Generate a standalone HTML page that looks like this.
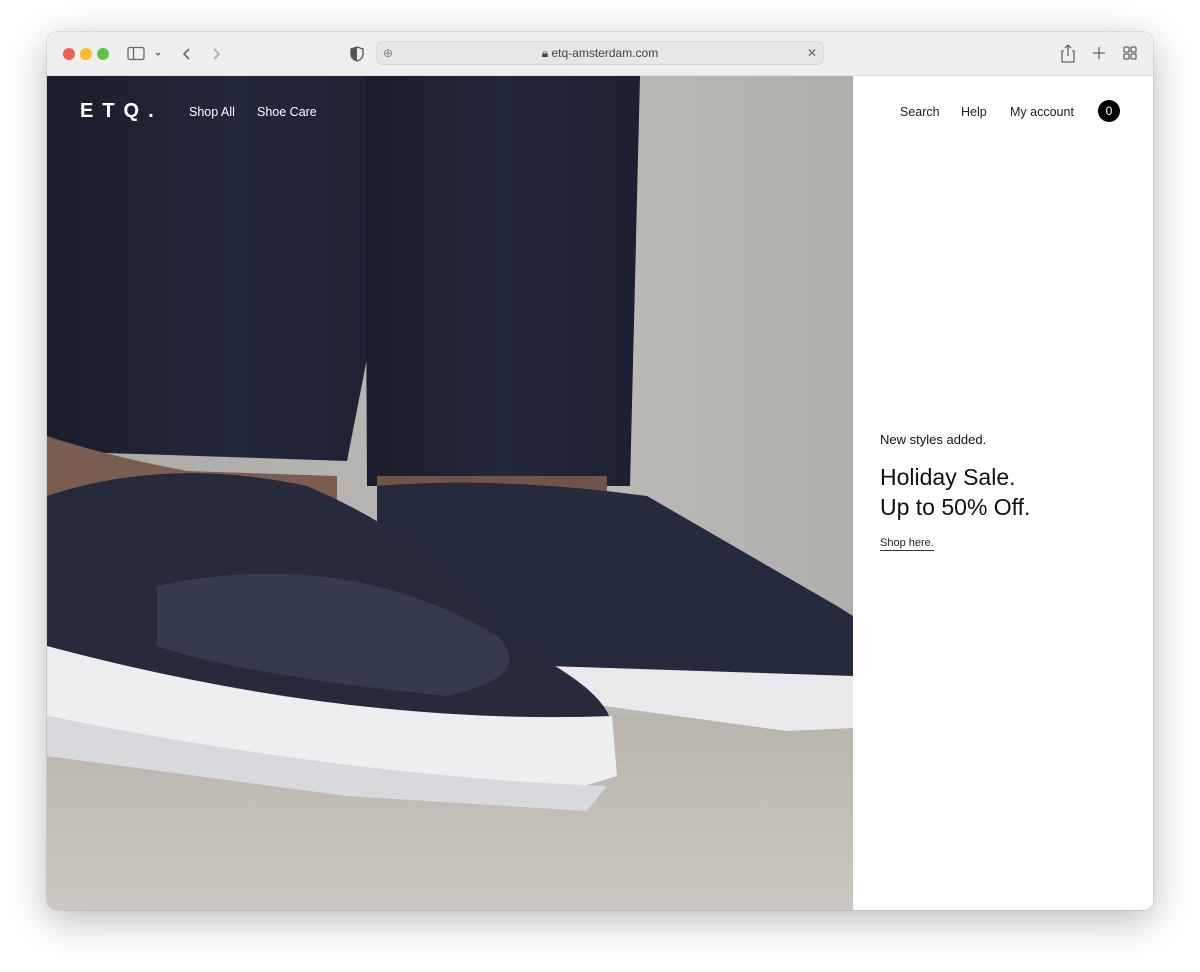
<!DOCTYPE html>
<html><head><meta charset="utf-8"><style>
*{margin:0;padding:0;box-sizing:border-box}
body{width:1200px;height:972px;background:#fff;font-family:"Liberation Sans",sans-serif;position:relative;overflow:hidden}
.win{position:absolute;left:47px;top:32px;width:1106px;height:878px;border-radius:10px;overflow:hidden;box-shadow:0 10px 40px rgba(0,0,0,.28),0 0 0 1px rgba(0,0,0,.08)}
.tb{position:absolute;left:0;top:0;width:100%;height:44px;background:#efefef;border-bottom:1px solid #dcdcdc}
.dot{position:absolute;top:16px;width:12px;height:12px;border-radius:50%}
.url{position:absolute;left:329px;top:9px;width:448px;height:24px;background:#e6e6e6;border-radius:7px;border:1px solid #d8d8d8;font-size:12px;color:#444;text-align:center;line-height:22px}
.img{position:absolute;left:0;top:44px;width:806px;height:834px;background:#b3b2b0}
.side{position:absolute;left:806px;top:44px;width:300px;height:834px;background:#fff}
.nav{position:absolute;top:73px;font-size:12.5px;color:#222}
</style></head><body>
<div class="win">
<div class="tb">
<div class="dot" style="left:16px;background:#ee5f57"></div>
<div class="dot" style="left:33px;background:#f5be2e"></div>
<div class="dot" style="left:50px;background:#5fc442"></div>
<svg style="position:absolute;left:80px;top:14px" width="120" height="16" fill="none" stroke="#666" stroke-width="1.3"><rect x="1" y="1.5" width="16" height="12" rx="2"/><line x1="6.5" y1="2" x2="6.5" y2="13"/><path d="M29 7l2 2 2-2"/><path d="M62 3l-5 5 5 5" stroke-width="1.6"/><path d="M87 3l5 5-5 5" stroke="#aaa" stroke-width="1.6"/></svg>
<svg style="position:absolute;left:303px;top:14px" width="14" height="16"><path d="M7 1l6 2v5c0 4-3 6-6 7-3-1-6-3-6-7V3z" fill="none" stroke="#555" stroke-width="1.3"/><path d="M7 1v14c-3-1-6-3-6-7V3z" fill="#555"/></svg>
<div class="url"><span style="position:absolute;left:6px;color:#888">⊕</span>🔒︎ etq-amsterdam.com<span style="position:absolute;right:6px;color:#666">✕</span></div>
<svg style="position:absolute;left:1012px;top:12px" width="80" height="20" fill="none" stroke="#666" stroke-width="1.3"><path d="M5 7H3v11h12V7h-2M9 1v11M6 4l3-3 3 3"/><path d="M40 3v12M34 9h12"/><rect x="65" y="3" width="5" height="5" rx="1"/><rect x="72" y="3" width="5" height="5" rx="1"/><rect x="65" y="10" width="5" height="5" rx="1"/><rect x="72" y="10" width="5" height="5" rx="1"/></svg>
</div>
<div class="img">
<svg width="806" height="834" viewBox="0 0 806 834">
<defs>
<linearGradient id="w" x1="0" x2="1"><stop offset="0" stop-color="#a8a7a4"/><stop offset=".6" stop-color="#bdbcb9"/><stop offset="1" stop-color="#b0afac"/></linearGradient>
<linearGradient id="f" y1="0" y2="1" x1="0" x2="0"><stop offset="0" stop-color="#b9b5ad"/><stop offset="1" stop-color="#cac7c0"/></linearGradient>
<linearGradient id="p" x1="0" x2="1"><stop offset="0" stop-color="#1a1d2a"/><stop offset=".5" stop-color="#23273a"/><stop offset="1" stop-color="#1c2030"/></linearGradient>
</defs>
<rect width="806" height="834" fill="url(#w)"/>
<rect y="640" width="806" height="194" fill="url(#f)"/>
<path d="M0 0H375L300 385 0 375z" fill="url(#p)"/>
<path d="M318 0H593L583 410 320 410z" fill="url(#p)"/>
<path d="M0 360Q60 380 140 395L290 400 290 440 0 440z" fill="#7a5d50"/>
<path d="M330 400H560L560 470 330 470z" fill="#6f5447"/>
<path d="M330 410Q450 400 600 420L790 530 806 540 806 600 520 610 330 520z" fill="#252a3c"/>
<path d="M500 590L806 600 806 652 740 655 520 625z" fill="#e9e9eb"/>
<path d="M0 420Q120 380 260 410 400 470 450 560 560 610 565 650 L0 650z" fill="#262a3b"/>
<path d="M110 510Q300 470 450 560 490 600 400 620 200 600 110 570z" fill="#353b4d"/>
<path d="M0 570Q300 650 565 640L570 700 520 715 300 700 0 640z" fill="#edeef0"/>
<path d="M0 640Q300 700 560 710L540 735 300 720 0 680z" fill="#d8d9dc"/>
</svg>
</div>
<div class="side"></div>
<div style="position:absolute;left:33px;top:68px;color:#fff;font-weight:bold;font-size:20px;letter-spacing:9px">ETQ.</div>
<div class="nav" style="left:142px;color:#fff">Shop All</div>
<div class="nav" style="left:210px;color:#fff">Shoe Care</div>
<div class="nav" style="left:853px">Search</div>
<div class="nav" style="left:914px">Help</div>
<div class="nav" style="left:963px">My account</div>
<div style="position:absolute;left:1051px;top:68px;width:22px;height:22px;border-radius:50%;background:#000;color:#fff;font-size:12px;text-align:center;line-height:22px">0</div>
<div style="position:absolute;left:833px;top:400px;font-size:13px;color:#111">New styles added.</div>
<div style="position:absolute;left:833px;top:430px;font-size:23px;line-height:30px;color:#111">Holiday Sale.<br>Up to 50% Off.</div>
<div style="position:absolute;left:833px;top:505px;font-size:11px;color:#222;border-bottom:1px solid #333;padding-bottom:1px">Shop here.</div>
</div>
</body></html>
